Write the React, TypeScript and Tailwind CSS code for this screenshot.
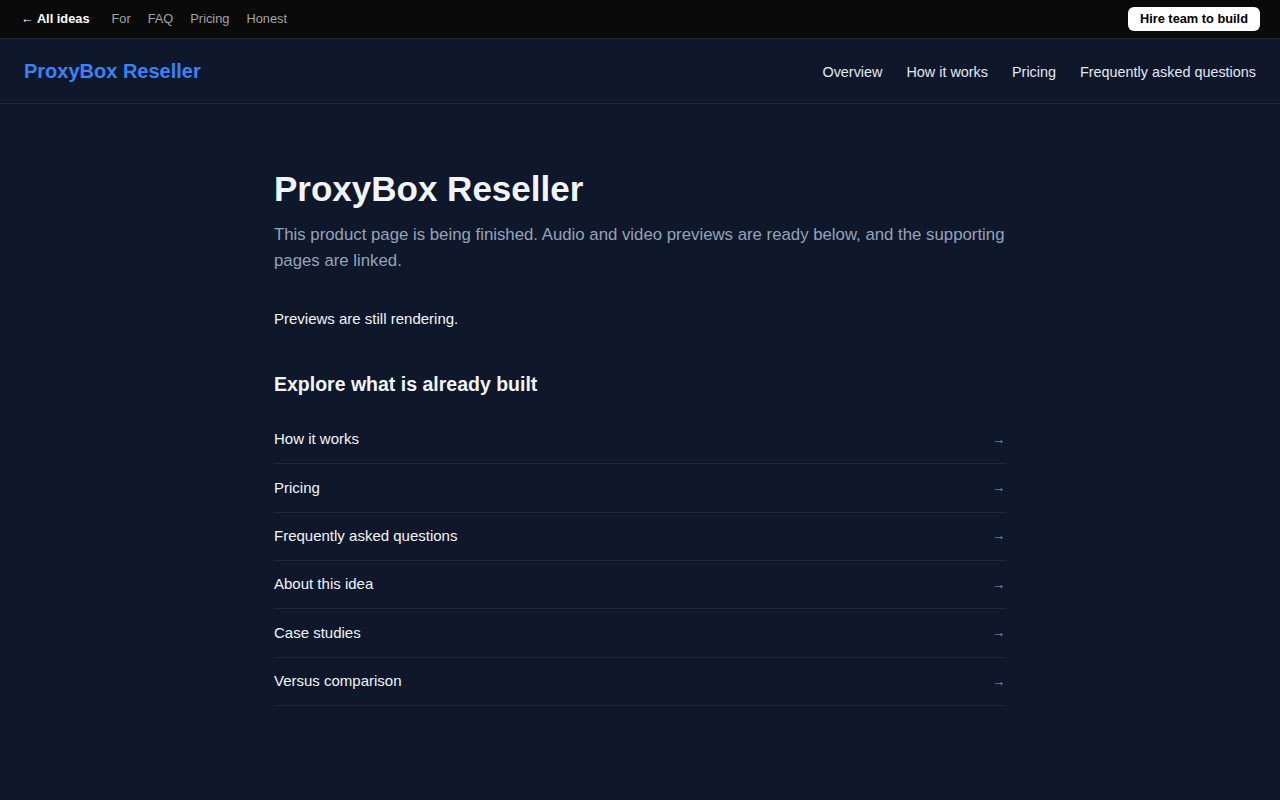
const topLinks = ['For', 'FAQ', 'Pricing', 'Honest'];
const navLinks = ['Overview', 'How it works', 'Pricing', 'Frequently asked questions'];
const builtPages = [
  'How it works',
  'Pricing',
  'Frequently asked questions',
  'About this idea',
  'Case studies',
  'Versus comparison',
];

export default function App() {
  return (
    <div className="min-h-screen bg-[#0f172a] font-['Liberation_Sans',Arial,sans-serif] text-slate-100">
      <div className="flex h-[39px] items-center justify-between border-b border-[#1f2937] bg-[#0a0a0a] pl-[21px] pr-5">
        <div className="flex items-center text-[12.8px]">
          <a href="#" className="mr-[22px] font-bold text-white">
            ← All ideas
          </a>
          <div className="flex gap-[17px] text-[#a3a3a3]">
            {topLinks.map((link) => (
              <a key={link} href="#">
                {link}
              </a>
            ))}
          </div>
        </div>
        <button className="rounded-md bg-white px-3 py-[4px] text-[12.8px] leading-4 font-bold text-black">
          Hire team to build
        </button>
      </div>

      <header className="flex h-[65px] items-center justify-between border-b border-[#1e293b] px-6">
        <a href="#" className="text-xl font-bold text-[#3b82f6]">
          ProxyBox Reseller
        </a>
        <nav className="mt-[3px] flex gap-6 text-[14.4px] text-[#e2e8f0]">
          {navLinks.map((link) => (
            <a key={link} href="#">
              {link}
            </a>
          ))}
        </nav>
      </header>

      <main className="mx-auto w-[732px] pt-[65px] pb-24">
        <h1 className="text-[35px] leading-10 font-bold text-[#f1f5f9]">ProxyBox Reseller</h1>
        <p className="mt-[13px] text-[16.8px] leading-[26px] text-[#94a3b8]">
          This product page is being finished. Audio and video previews are ready below, and the supporting
          pages are linked.
        </p>
        <p className="mt-[34px] text-[15px] text-[#f1f5f9]">Previews are still rendering.</p>

        <h2 className="mt-[39px] text-[19.5px] font-bold text-[#f1f5f9]">Explore what is already built</h2>
        <ul className="mt-[17px]">
          {builtPages.map((page) => (
            <li key={page} className="border-b border-[#1e293b]">
              <a href="#" className="flex h-[47.4px] items-center justify-between text-[15px] text-[#f1f5f9]">
                <span>{page}</span>
                <span className="mr-[1px] text-[13px] text-[#94a3b8]">→</span>
              </a>
            </li>
          ))}
        </ul>
      </main>
    </div>
  );
}
